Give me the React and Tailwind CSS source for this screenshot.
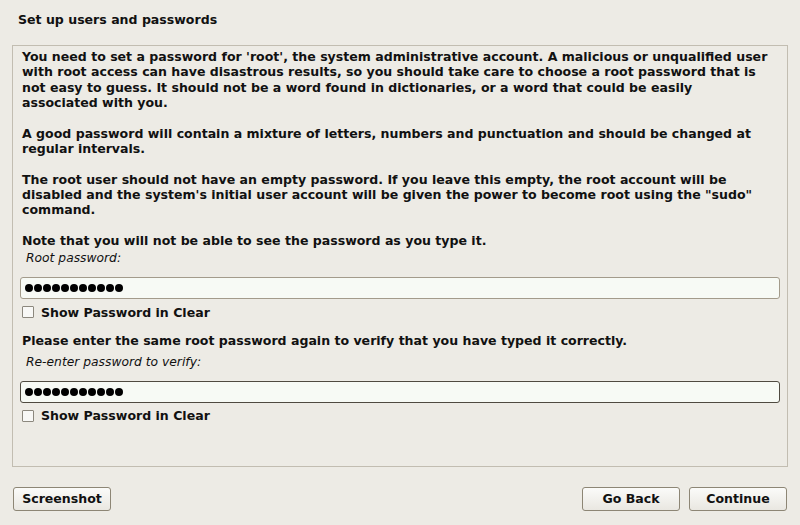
export default function App() {
  const font = { fontFamily: '"DejaVu Sans", sans-serif' };
  return (
    <div
      className="w-[800px] h-[525px] bg-[#edebe5] text-[#111] flex flex-col text-[12.55px] font-bold leading-[15.33px]"
      style={font}
    >
      <div className="pl-[18px] pt-[12px] h-[45px]">Set up users and passwords</div>

      <div className="ml-[12px] w-[776px] h-[422px] border border-[#c2bdb1] flex flex-col pt-[3px]">
        <div className="pl-[9px] pr-[4px] whitespace-nowrap">
          <p>
            You need to set a password for 'root', the system administrative account. A malicious or unqualified user
            <br />
            with root access can have disastrous results, so you should take care to choose a root password that is
            <br />
            not easy to guess. It should not be a word found in dictionaries, or a word that could be easily
            <br />
            associated with you.
          </p>
          <p className="mt-[15.33px]">
            A good password will contain a mixture of letters, numbers and punctuation and should be changed at
            <br />
            regular intervals.
          </p>
          <p className="mt-[15.33px]">
            The root user should not have an empty password. If you leave this empty, the root account will be
            <br />
            disabled and the system's initial user account will be given the power to become root using the "sudo"
            <br />
            command.
          </p>
          <p className="mt-[15.33px]">Note that you will not be able to see the password as you type it.</p>
        </div>
        <div className="pl-[13px] mt-[3px] text-[12.3px] italic font-normal leading-[15px]">Root password:</div>
        <PasswordField focused={false} />
        <ShowToggle />

        <div className="pl-[9px] mt-[13px]">
          Please enter the same root password again to verify that you have typed it correctly.
        </div>
        <div className="pl-[13px] mt-[6px] text-[12.3px] italic font-normal leading-[15px]">Re-enter password to verify:</div>
        <PasswordField focused />
        <ShowToggle />
      </div>

      <div className="flex items-center mt-[20px] px-[13px]">
        <Btn>Screenshot</Btn>
        <div className="flex-1" />
        <Btn>Go Back</Btn>
        <div className="w-[9px]" />
        <Btn>Continue</Btn>
      </div>
    </div>
  );
}

function PasswordField({ focused }) {
  return (
    <div
      className={
        "ml-[7px] mt-[11px] w-[760px] h-[22px] rounded-[3px] bg-[#f7faf5] flex items-center pl-[4px] border " +
        (focused ? "border-[#4f4a40]" : "border-[#a39b8b]")
      }
    >
      <span className="flex gap-[1px]">
        {Array.from({ length: 11 }).map((_, i) => (
          <span key={i} className="w-[8px] h-[8px] rounded-full bg-black" />
        ))}
      </span>
    </div>
  );
}

function ShowToggle() {
  return (
    <div className="flex items-center pl-[9px] mt-[5px] h-[16px]">
      <span className="w-[12px] h-[12px] border border-[#8c887e] bg-[#f8f8f6] rounded-[1px]" />
      <span className="ml-[7px]">Show Password in Clear</span>
    </div>
  );
}

function Btn({ children }) {
  return (
    <button className="w-[98px] h-[24px] rounded-[3px] border border-[#8d8675] bg-gradient-to-b from-[#fbfbf9] to-[#e9e7e1] text-[12.55px] font-bold text-[#111]">
      {children}
    </button>
  );
}
